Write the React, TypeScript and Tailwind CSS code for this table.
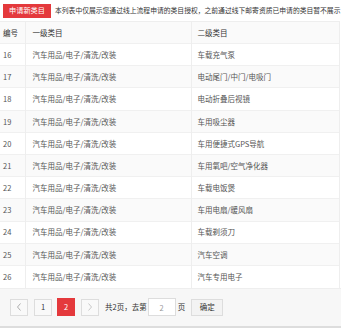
import React from "react";

const FONT = '"Noto Sans CJK SC", "Liberation Sans", sans-serif';

const rows: [number, string][] = [
  [16, "车载充气泵"],
  [17, "电动尾门/中门/电吸门"],
  [18, "电动折叠后视镜"],
  [19, "车用吸尘器"],
  [20, "车用便捷式GPS导航"],
  [21, "车用氧吧/空气净化器"],
  [22, "车载电饭煲"],
  [23, "车用电扇/暖风扇"],
  [24, "车载剃须刀"],
  [25, "汽车空调"],
  [26, "汽车专用电子"],
];

export default function App() {
  return (
    <div className="w-[341px] h-[331px] bg-white overflow-hidden text-[#555]" style={{ fontFamily: FONT }}>
      {/* 顶部操作 */}
      <div className="flex items-center h-[21px] pl-[3px] whitespace-nowrap">
        <button className="w-[48px] h-[14px] bg-[#e4393c] text-white text-[7.2px] leading-none shrink-0">
          申请新类目
        </button>
        <span className="ml-[4px] text-[6.8px] text-[#333]">
          本列表中仅展示您通过线上流程申请的类目授权，之前通过线下邮寄资质已申请的类目暂不展示
        </span>
      </div>

      {/* 类目列表 */}
      <table className="w-[339px] border-collapse text-[7.5px] table-fixed">
        <colgroup>
          <col className="w-[25px]" />
          <col className="w-[166px]" />
          <col className="w-[148px]" />
        </colgroup>
        <thead>
          <tr className="h-[22px] bg-[#fafafa] text-[#333] border-t border-[#eee]">
            <th className="font-normal text-left pl-[3px] border-r border-[#eee]">编号</th>
            <th className="font-normal text-left pl-[7px] border-r border-[#eee]">一级类目</th>
            <th className="font-normal text-left pl-[6px] border-r border-[#eee]">二级类目</th>
          </tr>
        </thead>
        <tbody>
          {rows.map(([id, name]) => (
            <tr
              key={id}
              className={`h-[22.2px] border-t border-[#f0f0f0] ${id % 2 === 1 ? "bg-[#fafafa]" : "bg-white"}`}
            >
              <td className="pl-[3px] border-r border-[#eee]">{id}</td>
              <td className="pl-[7px] border-r border-[#eee]">汽车用品/电子/清洗/改装</td>
              <td className="pl-[6px] border-r border-[#eee]">{name}</td>
            </tr>
          ))}
        </tbody>
      </table>

      {/* 分页 */}
      <div className="flex items-center h-[40px] bg-[#f7f7f7] border-t border-[#eee] border-b-2 border-b-[#ddd] pl-[10px] text-[7.5px] text-[#333]">
        <button className="w-[18px] h-[17px] border border-[#ddd] bg-[#f9f9f9] text-[#999] flex items-center justify-center">
          <svg width="6" height="8" viewBox="0 0 6 8" fill="none" stroke="#999" strokeWidth="0.8">
            <path d="M4.5 0.5 L1.5 4 L4.5 7.5" />
          </svg>
        </button>
        <button className="ml-[6px] w-[18px] h-[17px] border border-[#ddd] bg-[#f9f9f9] text-[#333] flex items-center justify-center">
          1
        </button>
        <button className="ml-[5px] w-[18px] h-[18px] bg-[#e4393c] text-white flex items-center justify-center">
          2
        </button>
        <button className="ml-[6px] w-[18px] h-[17px] border border-[#ddd] bg-[#f9f9f9] flex items-center justify-center">
          <svg width="6" height="8" viewBox="0 0 6 8" fill="none" stroke="#bbb" strokeWidth="0.8">
            <path d="M1.5 0.5 L4.5 4 L1.5 7.5" />
          </svg>
        </button>
        <span className="ml-[6px]">共2页，去第</span>
        <input
          className="ml-[1px] w-[28px] h-[18px] border border-[#ddd] bg-white text-center text-[7.5px] text-[#999] outline-none"
          defaultValue="2"
        />
        <span className="ml-[2px]">页</span>
        <button className="ml-[6px] w-[32px] h-[17px] border border-[#ddd] bg-[#f3f3f3] text-[#333]">确定</button>
      </div>
    </div>
  );
}
